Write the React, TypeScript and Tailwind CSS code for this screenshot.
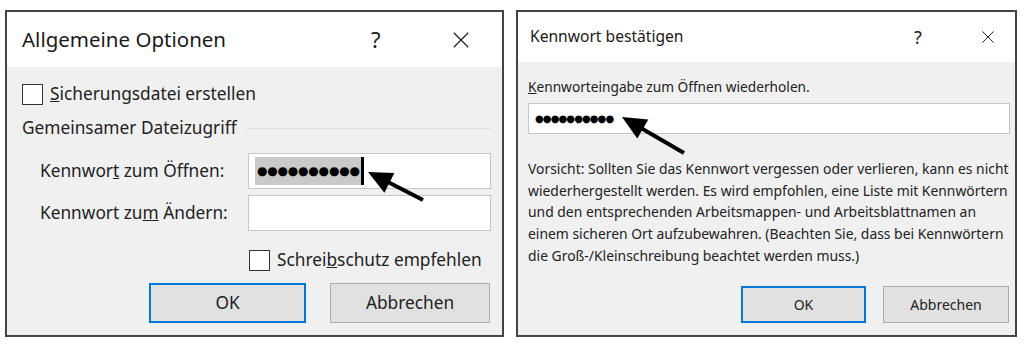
import React from "react";

const font = { fontFamily: '"Noto Sans", "Open Sans", sans-serif' };
const dotFont = { fontFamily: '"DejaVu Sans", sans-serif' };

function CloseIcon({ size }: { size: number }) {
  return (
    <svg width={size} height={size} viewBox="0 0 20 20">
      <path d="M2 2 L18 18 M18 2 L2 18" stroke="#222" strokeWidth="1.4" fill="none" />
    </svg>
  );
}

function Checkbox() {
  return <div className="w-[21px] h-[21px] bg-white border border-[#333] shrink-0" />;
}

function Button({ label, primary, className }: { label: string; primary?: boolean; className: string }) {
  return (
    <div
      className={
        "flex items-center justify-center bg-[#e1e1e1] text-[#222] " +
        (primary ? "border-2 border-[#0078d7] " : "border border-[#adadad] ") +
        className
      }
    >
      {label}
    </div>
  );
}

function AllgemeineOptionen() {
  return (
    <div className="w-[499px] h-[327px] border-2 border-[#444] bg-white flex flex-col">
      <div className="h-[55px] flex items-center pl-[15px] shrink-0">
        <div className="text-[20.5px] text-[#1a1a1a] flex-1">Allgemeine Optionen</div>
        <div className="text-[22px] text-[#222] w-[14px] mr-[67px]">?</div>
        <div className="mr-[32px] flex items-center">
          <CloseIcon size={18} />
        </div>
      </div>
      <div className="flex-1 bg-[#f0f0f0] pl-[15px] pr-[11px] text-[17.3px] text-[#222]">
        <div className="mt-[16px] h-[22px] flex items-center gap-[7px]">
          <Checkbox />
          <span>
            <u>S</u>icherungsdatei erstellen
          </span>
        </div>
        <div className="mt-[12px] h-[22px] flex items-center gap-[10px]">
          <span className="whitespace-nowrap">Gemeinsamer Dateizugriff</span>
          <div className="flex-1 h-px bg-[#dcdcdc]" />
        </div>
        <div className="mt-[14px] h-[36px] flex items-center">
          <span className="pl-[18px] flex-1">
            Kennwor<u>t</u> zum Öffnen:
          </span>
          <div className="w-[243px] h-full bg-white border border-[#c6c6c6] flex items-center pl-[6px]">
            <div
              className="h-[28px] bg-[#c9c9c9] flex items-center pl-[2px] pr-[1px] text-black text-[12px] tracking-[-0.2px] leading-none"
              style={dotFont}
            >
              ●●●●●●●●●●
            </div>
            <div className="w-[3px] h-[28px] bg-black" />
          </div>
        </div>
        <div className="mt-[6px] h-[36px] flex items-center">
          <span className="pl-[18px] flex-1">
            Kennwort zu<u>m</u> Ändern:
          </span>
          <div className="w-[243px] h-full bg-white border border-[#c6c6c6]" />
        </div>
        <div className="mt-[18px] h-[22px] flex items-center gap-[7px] pl-[227px]">
          <Checkbox />
          <span className="whitespace-nowrap">
            Schrei<u>b</u>schutz empfehlen
          </span>
        </div>
        <div className="mt-[12px] h-[40px] flex pl-[127px] gap-[24px]">
          <Button label="OK" primary className="w-[157px] h-full" />
          <Button label="Abbrechen" className="w-[160px] h-full" />
        </div>
      </div>
    </div>
  );
}

function KennwortBestaetigen() {
  return (
    <div className="w-[501px] h-[327px] border-2 border-[#444] bg-white flex flex-col">
      <div className="h-[50px] flex items-center pl-[12px] shrink-0">
        <div className="text-[15.6px] text-[#1a1a1a] flex-1">Kennwort bestätigen</div>
        <div className="text-[18px] text-[#222] w-[10px] mr-[57px]">?</div>
        <div className="mr-[20px] flex items-center">
          <CloseIcon size={14} />
        </div>
      </div>
      <div className="flex-1 bg-[#f0f0f0] pl-[10px] pr-[5px] text-[13.7px] text-[#222]">
        <div className="mt-[15px] h-[20px] flex items-center">
          <span>
            <u>K</u>ennworteingabe zum Öffnen wiederholen.
          </span>
        </div>
        <div
          className="mt-[6px] h-[31px] bg-white border border-[#c6c6c6] flex items-center pl-[6px] text-[10px] tracking-[-0.9px] text-black leading-none"
          style={dotFont}
        >
          ●●●●●●●●●●
        </div>
        <div className="mt-[24px] leading-[21.7px] whitespace-nowrap text-[13.9px]">
          <div>Vorsicht: Sollten Sie das Kennwort vergessen oder verlieren, kann es nicht</div>
          <div>wiederhergestellt werden. Es wird empfohlen, eine Liste mit Kennwörtern</div>
          <div>und den entsprechenden Arbeitsmappen- und Arbeitsblattnamen an</div>
          <div>einem sicheren Ort aufzubewahren. (Beachten Sie, dass bei Kennwörtern</div>
          <div>die Groß-/Kleinschreibung beachtet werden muss.)</div>
        </div>
        <div className="mt-[19px] h-[37px] flex pl-[213px] gap-[17px] text-[14px]">
          <Button label="OK" primary className="w-[125px] h-full" />
          <Button label="Abbrechen" className="w-[126px] h-full" />
        </div>
      </div>
    </div>
  );
}

export default function App() {
  return (
    <div className="relative w-[1024px] h-[344px] bg-white overflow-hidden" style={font}>
      <div className="flex gap-[12px] pl-[5px] pt-[10px]">
        <AllgemeineOptionen />
        <KennwortBestaetigen />
      </div>
      <svg className="absolute inset-0 pointer-events-none" width="1024" height="344">
        <line x1="386" y1="181" x2="423" y2="200" stroke="#000" strokeWidth="4" />
        <polygon points="368,172 384.4,192.7 394.4,173.1" fill="#000" />
        <line x1="640" y1="127.5" x2="684" y2="153" stroke="#000" strokeWidth="4" />
        <polygon points="622,117 637.3,138.5 648.3,119.5" fill="#000" />
      </svg>
    </div>
  );
}
